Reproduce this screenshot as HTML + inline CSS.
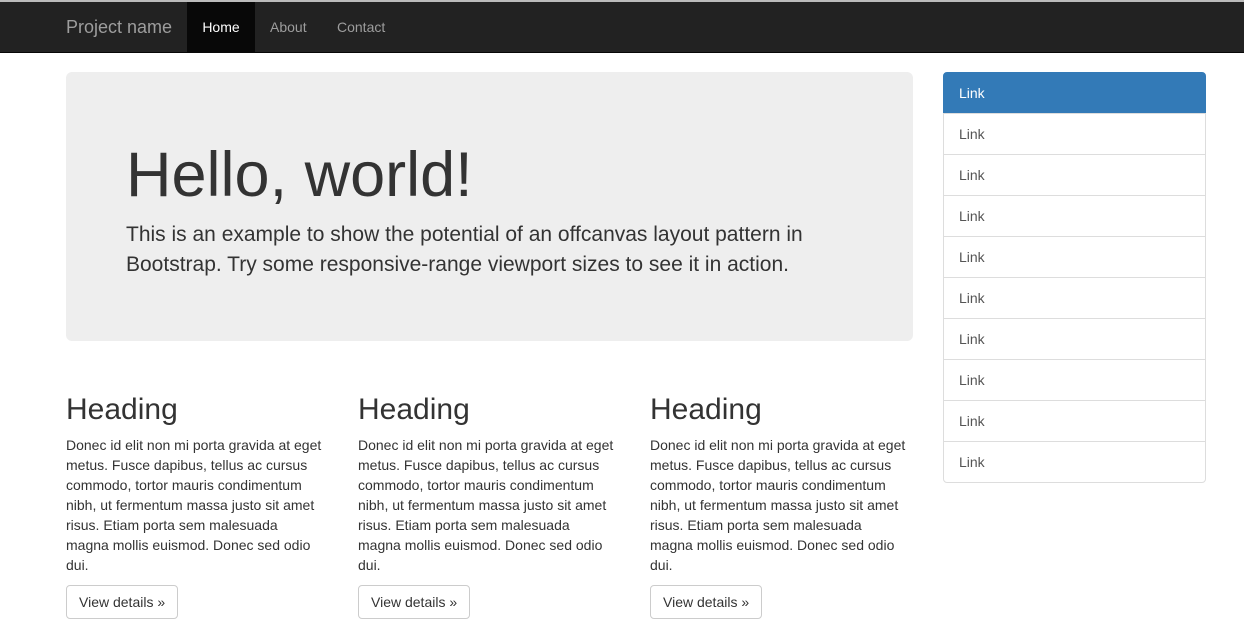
<!DOCTYPE html>
<html><head><style>
*{box-sizing:border-box;margin:0;padding:0}
body{width:1244px;height:631px;overflow:hidden;background:#fff;font-family:"Liberation Sans",Arial,sans-serif;color:#333;font-size:14px;line-height:20px;position:relative}
.topline{position:absolute;left:0;top:0;width:1244px;height:2px;background:#bbb}
.nav{position:absolute;left:0;top:2px;width:1244px;height:51px;background:#222;border-bottom:1px solid #080808}
.nav a{position:absolute;top:0;height:50px;line-height:50px;color:#9d9d9d;text-decoration:none;font-size:14px}
.brand{left:66px;font-size:18px !important}
.home{left:187px;width:68px;background:#080808;color:#fff !important;text-align:center}
.jumbo{position:absolute;left:66px;top:72px;width:847px;height:269px;background:#eee;border-radius:6px;padding:0 60px}
.jumbo h1{font-size:63px;font-weight:normal;line-height:66px;margin-top:70px;color:#333}
.jumbo p{font-size:21px;line-height:30px;margin-top:12px;width:700px}
.col{position:absolute;top:390px;width:270px;white-space:nowrap}
.col h2{font-size:30px;font-weight:normal;line-height:40px;margin-bottom:5px}
.col p{margin-bottom:10px}
.btn{display:inline-block;border:1px solid #ccc;border-radius:4px;padding:6px 12px;line-height:20px;color:#333}
.list{position:absolute;left:943px;top:72px;width:263px}
.list div{height:42px;line-height:40px;padding-left:15px;border:1px solid #ddd;margin-bottom:-1px;color:#555}
.list div.a{background:#337ab7;border-color:#337ab7;color:#fff;border-radius:4px 4px 0 0}
.list div:last-child{border-radius:0 0 4px 4px}
</style></head><body>
<div class="topline"></div>
<div class="nav">
<a class="brand">Project name</a>
<a class="home">Home</a>
<a style="left:270px">About</a>
<a style="left:337px">Contact</a>
</div>
<div class="jumbo"><h1>Hello, world!</h1><p>This is an example to show the potential of an offcanvas layout pattern in Bootstrap. Try some responsive-range viewport sizes to see it in action.</p></div>
<div class="col" style="left:66px"><h2>Heading</h2><p>Donec id elit non mi porta gravida at eget<br>metus. Fusce dapibus, tellus ac cursus<br>commodo, tortor mauris condimentum<br>nibh, ut fermentum massa justo sit amet<br>risus. Etiam porta sem malesuada<br>magna mollis euismod. Donec sed odio<br>dui.</p><span class="btn">View details »</span></div>
<div class="col" style="left:358px"><h2>Heading</h2><p>Donec id elit non mi porta gravida at eget<br>metus. Fusce dapibus, tellus ac cursus<br>commodo, tortor mauris condimentum<br>nibh, ut fermentum massa justo sit amet<br>risus. Etiam porta sem malesuada<br>magna mollis euismod. Donec sed odio<br>dui.</p><span class="btn">View details »</span></div>
<div class="col" style="left:650px"><h2>Heading</h2><p>Donec id elit non mi porta gravida at eget<br>metus. Fusce dapibus, tellus ac cursus<br>commodo, tortor mauris condimentum<br>nibh, ut fermentum massa justo sit amet<br>risus. Etiam porta sem malesuada<br>magna mollis euismod. Donec sed odio<br>dui.</p><span class="btn">View details »</span></div>
<div class="list"><div class="a">Link</div><div>Link</div><div>Link</div><div>Link</div><div>Link</div><div>Link</div><div>Link</div><div>Link</div><div>Link</div><div>Link</div></div>
</body></html>
